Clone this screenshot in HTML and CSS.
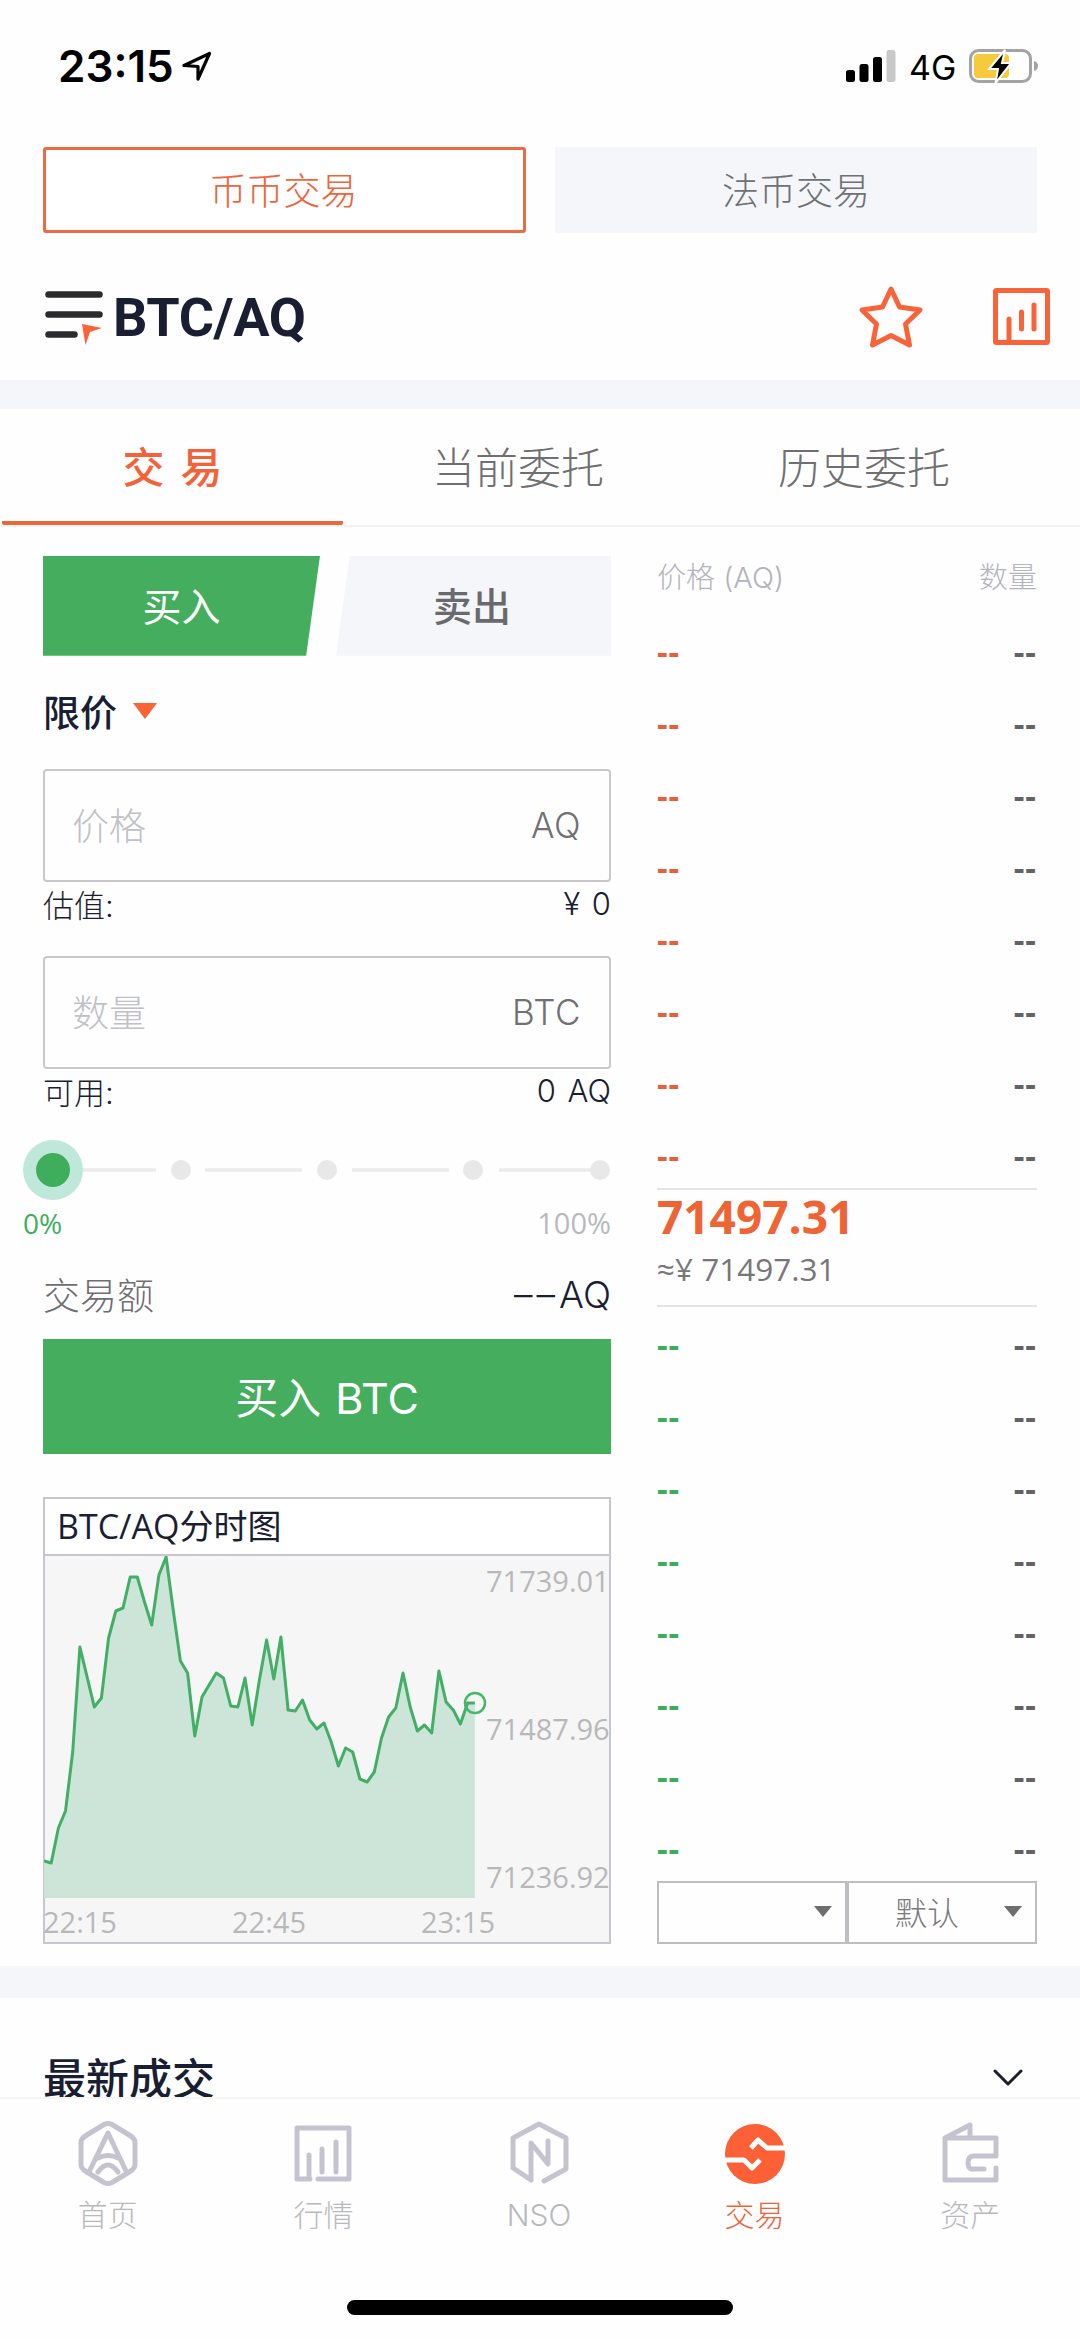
FILE: index.html
```html
<!DOCTYPE html>
<html lang="zh-CN">
  <head>
    <meta charset="UTF-8" />
    <meta name="viewport" content="width=device-width, initial-scale=1.0" />
    <title>BTC/AQ 交易</title>
    <link rel="stylesheet" href="styles.css">
  </head>
  <body>
    <div class="statusbar">
      <span class="time">23:15</span>
      <svg class="location" width="32" height="32" viewBox="0 0 32 32">
        <path d="M3 15.500L28.500 3.500L17 29V16.500Z" fill="none" stroke="#000" stroke-width="3.200" stroke-linejoin="round" />
      </svg>
      <div class="status-right">
        <svg width="50" height="32" viewBox="0 0 50 32">
          <rect x="0" y="20" width="9" height="12" rx="2.500" />
          <rect x="13.500" y="14" width="9" height="18" rx="2.500" />
          <rect x="27" y="7" width="9" height="25" rx="2.500" />
          <rect x="40.500" y="0" width="9" height="32" rx="2.500" fill="#c8c8c8" />
        </svg>
        <span class="network">4G</span>
        <svg width="70" height="34" viewBox="0 0 70 34">
          <rect x="1.500" y="1.500" width="60" height="31" rx="8" fill="#fff" stroke="#a3a3a3" stroke-width="3" />
          <rect x="5" y="5" width="35" height="24" rx="4" fill="#f6ca3c" />
          <path d="M65 12q4 1 4 5t-4 5z" fill="#a3a3a3" />
          <path d="M36 1L20 20h9L26.500 34L42 14h-9z" fill="#000" stroke="#fff" stroke-width="2" />
        </svg>
      </div>
    </div>

    <div class="market-switch">
      <button class="active">币币交易</button>
      <button>法币交易</button>
    </div>

    <header>
      <svg width="60" height="56" viewBox="0 0 60 56">
        <path d="M3.500 5.500h51M3.500 25.500h51M3.500 45.500h26" stroke="#2b2b2e" stroke-width="6.500" stroke-linecap="round" />
        <path d="M37 35l20 4l-12 4l-4.500 13z" fill="#fb6236" />
      </svg>
      <h1>BTC/AQ</h1>
      <svg class="star" width="66" height="64" viewBox="0 0 66 64">
        <path d="M33 4L41.500 22L62 25L47.500 39L51.500 60L33 50.500L14.500 60L18.500 39L4 25L24.500 22Z" fill="none" stroke="#f9633a" stroke-width="5" stroke-linejoin="round" />
      </svg>
      <svg width="57" height="57" viewBox="0 0 57 57">
        <path d="M16 52V31M28.500 41V24M41 41V17" stroke="#f9633a" stroke-width="5" stroke-linecap="round" />
        <rect x="2.500" y="2.500" width="52" height="52" rx="1" fill="none" stroke="#f9633a" stroke-width="5" />
      </svg>
    </header>

    <nav class="tabs">
      <a class="active">交 易</a>
      <a>当前委托</a>
      <a>历史委托</a>
    </nav>

    <main>
      <section class="trade">
        <div class="side">
          <button class="buy">买入</button>
          <button class="sell">卖出</button>
        </div>
        <div class="order-type">限价 <i class="caret"></i></div>

        <div class="field"><span>价格</span><b>AQ</b></div>
        <div class="hint"><span>估值:</span><span>¥ 0</span></div>
        <div class="field"><span>数量</span><b>BTC</b></div>
        <div class="hint"><span>可用:</span><span>0 AQ</span></div>

        <svg class="slider" width="590" height="62" viewBox="0 0 590 62">
          <path d="M45 31h90M184 31h97M331 31h97M478 31h101" stroke="#ebebeb" stroke-width="3.500" />
          <g fill="#e8e8e8">
            <circle cx="160" cy="31" r="10" />
            <circle cx="306" cy="31" r="10" />
            <circle cx="452" cy="31" r="10" />
            <circle cx="579" cy="31" r="10" />
          </g>
          <circle cx="32" cy="31" r="30" fill="#bfe8da" />
          <circle cx="32" cy="31" r="17" fill="#3fae5c" />
        </svg>
        <div class="percent"><span>0%</span><span>100%</span></div>

        <div class="amount"><span>交易额</span><b><i>––</i>AQ</b></div>
        <button class="submit">买入 BTC</button>

        <div class="chart">
          <h2>BTC/AQ分时图</h2>
          <div class="plot">
            <svg width="450" height="342" viewBox="0 0 450 342">
              <polygon id="area" fill="#cce5d8" />
              <polyline id="line" fill="none" stroke="#43ae66" stroke-width="3" stroke-linejoin="round" />
              <circle cx="431" cy="147" r="10" fill="none" stroke="#43b867" stroke-width="2.500" />
            </svg>
            <div class="prices">
              <span>71739.01</span>
              <span>71487.96</span>
              <span>71236.92</span>
            </div>
          </div>
          <div class="times"><span>22:15</span><span>22:45</span><span>23:15</span></div>
        </div>
      </section>

      <section class="book">
        <div class="book-head"><span>价格 (AQ)</span><span>数量</span></div>
        <ul id="asks" class="asks"></ul>
        <div class="last">
          <strong>71497.31</strong>
          <span>≈¥ 71497.31</span>
        </div>
        <ul id="bids" class="bids"></ul>
        <div class="selects">
          <div class="select"><span></span><i class="caret"></i></div>
          <div class="select"><span>默认</span><i class="caret"></i></div>
        </div>
      </section>
    </main>

    <section class="recent">
      <h3>最新成交</h3>
      <svg width="32" height="20" viewBox="0 0 32 20">
        <path d="M3 3L16 16L29 3" fill="none" stroke="#1a1d2e" stroke-width="3" stroke-linecap="round" stroke-linejoin="round" />
      </svg>
    </section>

    <footer>
      <a>
        <svg width="66" height="68" viewBox="0 0 66 68">
          <path d="M29 4.500q4-2 8 0l18 11q5 3 5 7v22q0 4-5 7l-18 11q-4 2-8 0l-18-11q-5-3-5-7v-22q0-4 5-7z" />
          <path d="M14 52L33 13L51 51M23 38q10-5 20 0M23 52q10-14 20 0" />
        </svg>
        首页
      </a>
      <a>
        <svg width="66" height="68" viewBox="0 0 66 68">
          <path d="M20 59H7V8h52v51H28M19 59V35M32 52V29M46 52V22" />
        </svg>
        行情
      </a>
      <a>
        <svg width="66" height="68" viewBox="0 0 66 68">
          <path d="M25 60V23L42 44V21M25 60L7 48V18L33 4L60 18V49L38 61" />
        </svg>
        NSO
      </a>
      <a class="active">
        <svg width="66" height="68" viewBox="0 0 66 68">
          <circle cx="33" cy="34" r="30" fill="#fb6036" stroke="none" />
          <path d="M64 28H45L36 20L29 28M1 40H22L30 48L38 40" stroke="#fff" stroke-linecap="butt" />
        </svg>
        交易
      </a>
      <a>
        <svg width="66" height="68" viewBox="0 0 66 68">
          <path d="M8 18L33 5V17M8 18H59V36H37Q31 36 31 43T37 49H47M59 48V60H8V18" />
        </svg>
        资产
      </a>
      <div class="home-bar"></div>
    </footer>

    <script>
      const rows = 8;
      const step = 7.18;
      const bottom = 342;
      const values = [
        305, 307, 272, 255, 196, 91, 121, 151, 142, 82, 55, 52, 21, 21, 46, 69,
        19, 1, 54, 105, 117, 180, 141, 129, 117, 122, 150, 151, 122, 169, 124,
        84, 123, 81, 154, 155, 144, 164, 173, 167, 186, 210, 192, 196, 223, 226,
        216, 182, 161, 152, 117, 151, 175, 169, 177, 115, 146, 154, 168, 147, 147,
      ];

      function fillBook(id) {
        const list = document.getElementById(id);
        for (let i = 0; i < rows; i++) {
          const li = document.createElement("li");
          li.innerHTML = "<span>--</span><span>--</span>";
          list.appendChild(li);
        }
      }

      fillBook("asks");
      fillBook("bids");

      const points = values.map((y, i) => (i * step).toFixed(1) + "," + y).join(" ");
      const last = ((values.length - 1) * step).toFixed(1);
      document.getElementById("line").setAttribute("points", points);
      document
        .getElementById("area")
        .setAttribute("points", `0,${bottom} ${points} ${last},${bottom}`);
    </script>
  </body>
</html>
```
FILE: styles.css
```css
* {
  box-sizing: border-box;
}
body {
  margin: 0;
  width: 1080px;
  height: 2339px;
  overflow: hidden;
  display: flex;
  flex-direction: column;
  background-color: #fefefe;
  color: #1a1e33;
  font-family: "Open Sans", "Noto Sans CJK SC", sans-serif;
}
h1,
h2,
h3,
ul {
  margin: 0;
  padding: 0;
  list-style: none;
}
svg {
  display: block;
  flex: none;
}
button {
  border: none;
  padding: 0;
  font-family: inherit;
}
.statusbar {
  height: 147px;
  padding: 0 41px 14px 58px;
  display: flex;
  align-items: center;
  color: #000;
  font-family: "Inter", sans-serif;
}
.time {
  width: 123px;
  font-size: 44px;
  font-weight: 600;
  white-space: nowrap;
}
.status-right {
  margin-left: auto;
  display: flex;
  align-items: center;
}
.network {
  width: 60px;
  margin: 2px 0 0 13px;
  font-size: 34px;
}
.market-switch {
  height: 86px;
  padding: 0 43px;
  display: flex;
  justify-content: space-between;
}
.market-switch button {
  width: 482px;
  padding-bottom: 2px;
  background-color: #f4f6fa;
  color: #707075;
  font-size: 37px;
  font-weight: 300;
}
.market-switch .active {
  width: 483px;
  padding-right: 2px;
  border: 3px solid #ee6a42;
  border-radius: 3px;
  background-color: #fff;
  color: #f0643c;
}
header {
  height: 176px;
  padding: 21px 30px 0 45px;
  display: flex;
  align-items: center;
  border-bottom: 29px solid #f4f6fa;
}
h1 {
  margin-left: 8px;
  padding-top: 2px;
  font-family: "Roboto", sans-serif;
  font-size: 54px;
  font-weight: 700;
  letter-spacing: -0.4px;
}
.star {
  margin: 0 69px 0 auto;
}
.tabs {
  height: 118px;
  padding-right: 43px;
  display: flex;
  border-bottom: 2px solid #f3f3f3;
}
.tabs a {
  width: 346px;
  height: 116px;
  padding-bottom: 2px;
  display: flex;
  align-items: center;
  justify-content: center;
  color: #6f6f73;
  font-size: 43px;
  font-weight: 300;
}
.tabs .active {
  width: 341px;
  margin: 0 2px;
  padding-bottom: 0;
  border-bottom: 4px solid #e8683a;
  border-radius: 2px;
  color: #f4623a;
  font-size: 42px;
  font-weight: 500;
  word-spacing: 5px;
}
main {
  height: 1440px;
  padding: 29px 43px 0;
  display: flex;
  gap: 46px;
}
.trade {
  width: 568px;
}
.side {
  height: 100px;
  display: flex;
  gap: 16px;
}
.side button {
  height: 100px;
  padding-bottom: 3px;
  font-size: 39px;
  font-weight: 500;
}
.side .buy {
  width: 277px;
  background-color: #44ae5e;
  color: #fff;
  font-weight: 400;
  clip-path: polygon(0 0, 100% 0, 95% 100%, 0 100%);
}
.side .sell {
  width: 275px;
  padding-right: 3px;
  background-color: #f4f6fa;
  color: #6a6a6e;
  clip-path: polygon(5% 0, 100% 0, 100% 100%, 0 100%);
}
.order-type {
  height: 113px;
  padding-bottom: 2px;
  display: flex;
  align-items: center;
  gap: 16px;
  font-size: 37px;
  font-weight: 500;
}
.caret {
  border: 12px solid transparent;
  border-top: 16px solid #fb6236;
  border-bottom: none;
}
.field {
  height: 113px;
  padding: 0 28px 3px 27px;
  display: flex;
  align-items: center;
  justify-content: space-between;
  border: 2px solid #c8c8cb;
  border-radius: 4px;
  color: #c0c0c8;
  font-size: 37px;
  font-weight: 300;
}
.field b {
  padding-top: 3px;
  color: #707074;
  font-family: "Inter", sans-serif;
  font-size: 35px;
  font-weight: 300;
  letter-spacing: 0.5px;
}
.hint {
  height: 74px;
  padding: 0 0 31px;
  display: flex;
  align-items: center;
  justify-content: space-between;
  font-family: "Inter", "Noto Sans CJK SC", sans-serif;
  font-size: 31px;
  font-weight: 300;
  word-spacing: 3px;
}
.slider {
  margin: -4px 0 0 -22px;
}
.percent {
  height: 49px;
  margin-left: -20px;
  padding-bottom: 6px;
  display: flex;
  align-items: center;
  justify-content: space-between;
  color: #b9b9bd;
  font-size: 29px;
}
.percent span:first-child {
  padding-top: 2px;
  color: #3fae5c;
  font-size: 28px;
}
.amount {
  height: 89px;
  display: flex;
  align-items: center;
  justify-content: space-between;
  color: #6f6f73;
  font-size: 37px;
  font-weight: 300;
}
.amount b {
  color: #1a1e33;
  font-family: "Inter", sans-serif;
  font-size: 37px;
  font-weight: 300;
}
.amount i {
  font-style: normal;
  letter-spacing: 4px;
}
.submit {
  width: 100%;
  height: 115px;
  padding-bottom: 2px;
  display: block;
  background-color: #44ae5e;
  color: #fff;
  font-family: "Inter", "Noto Sans CJK SC", sans-serif;
  font-size: 43px;
  word-spacing: 2px;
}
.chart {
  height: 447px;
  margin-top: 43px;
  border: 2px solid #c6c6cf;
  background-color: #f6f6f6;
}
.chart h2 {
  height: 57px;
  padding-left: 12px;
  border-bottom: 2px solid #c6c6cf;
  background-color: #fff;
  font-size: 34px;
  font-weight: 400;
  line-height: 55px;
}
.plot {
  margin-left: -1px;
  display: flex;
}
.prices {
  height: 342px;
  margin-left: -8px;
  padding-top: 4px;
  display: flex;
  flex-direction: column;
  justify-content: space-between;
}
.prices span,
.times span {
  color: #b8b8bb;
  font-size: 29px;
  line-height: 42px;
}
.times {
  width: 452px;
  height: 45px;
  margin-left: -2px;
  padding-top: 3px;
  display: flex;
  justify-content: space-between;
}
.book {
  width: 380px;
}
.book-head {
  height: 33px;
  display: flex;
  align-items: center;
  justify-content: space-between;
  margin: 3px 0 24px;
  color: #b4b4bc;
  font-family: "Inter", "Noto Sans CJK SC", sans-serif;
  font-size: 29px;
  font-weight: 300;
}
.book li {
  height: 72px;
  display: flex;
  align-items: center;
  justify-content: space-between;
  color: #636366;
  font-size: 33px;
  font-weight: 700;
  letter-spacing: 1px;
}
.asks {
  height: 572px;
}
.asks li span:first-child {
  color: #e8603a;
}
.bids {
  height: 573px;
  padding-top: 2px;
}
.bids li span:first-child {
  color: #3fae5c;
}
.last {
  height: 119px;
  display: flex;
  flex-direction: column;
  border: solid #e4e4e6;
  border-width: 2px 0;
}
.last strong {
  color: #ee6434;
  font-size: 46px;
  line-height: 52px;
}
.last span {
  color: #77777a;
  font-size: 31.5px;
  line-height: 54px;
}
.selects {
  height: 63px;
  margin-top: 1px;
  display: flex;
}
.select {
  width: 190px;
  padding: 0 13px 2px 46px;
  display: flex;
  align-items: center;
  justify-content: space-between;
  border: 2px solid #bdbdc2;
  color: #7a7a7d;
  font-size: 32px;
  font-weight: 300;
}
.select .caret {
  border-width: 11px 9px 0;
  border-top-color: #6e6e70;
}
.recent {
  height: 131px;
  padding: 31px 56px 0 43px;
  display: flex;
  align-items: center;
  justify-content: space-between;
  border-top: 32px solid #f4f6fa;
}
.recent h3 {
  padding-top: 26px;
  font-size: 43px;
  font-weight: 500;
}
.recent svg {
  margin-top: 30px;
}
footer {
  height: 242px;
  padding-top: 21px;
  display: flex;
  flex-wrap: wrap;
  align-content: flex-start;
  border-top: 2px solid #f4f4f4;
}
footer a {
  width: 215.6px;
  height: 180px;
  display: flex;
  flex-direction: column;
  align-items: center;
  color: #b9b9bd;
  font-family: "Inter", "Noto Sans CJK SC", sans-serif;
  font-size: 30px;
  font-weight: 300;
  line-height: 54px;
}
footer a svg {
  fill: none;
  stroke: #c4c3cf;
  stroke-width: 5;
  stroke-linecap: round;
  stroke-linejoin: round;
}
footer .active {
  color: #f0623a;
}
.home-bar {
  width: 386px;
  height: 15px;
  margin: 0 auto;
  border-radius: 8px;
  background-color: #000;
}
```
